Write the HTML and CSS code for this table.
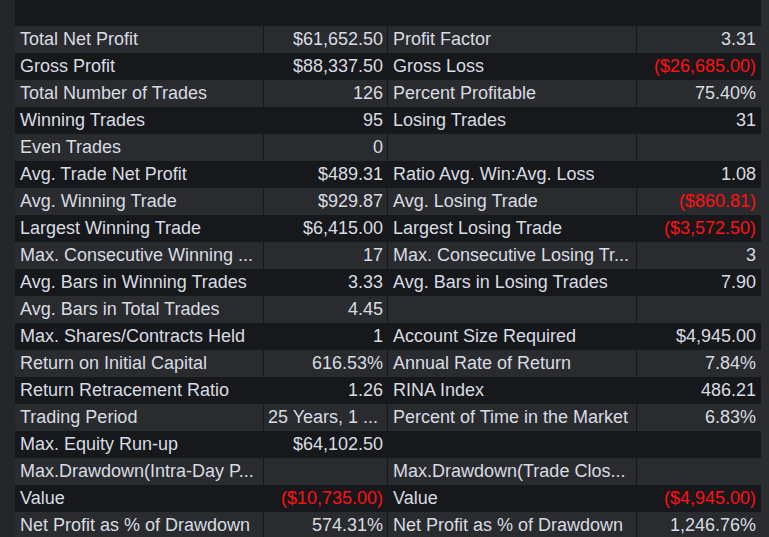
FILE: index.html
```html
<!DOCTYPE html>
<html>
<head>
<meta charset="utf-8">
<link rel="stylesheet" href="styles.css">
</head>
<body>
<div class="frame">
  <div class="side-left"></div>
  <div class="main">
    <div class="header"></div>
    <div class="table">
      <div class="row light"><div class="c lbl">Total Net Profit</div><div class="c val">$61,652.50</div><div class="c lbl">Profit Factor</div><div class="c val">3.31</div></div>
      <div class="row dark"><div class="c lbl">Gross Profit</div><div class="c val">$88,337.50</div><div class="c lbl">Gross Loss</div><div class="c val neg">($26,685.00)</div></div>
      <div class="row light"><div class="c lbl">Total Number of Trades</div><div class="c val">126</div><div class="c lbl">Percent Profitable</div><div class="c val">75.40%</div></div>
      <div class="row dark"><div class="c lbl">Winning Trades</div><div class="c val">95</div><div class="c lbl">Losing Trades</div><div class="c val">31</div></div>
      <div class="row light"><div class="c lbl">Even Trades</div><div class="c val">0</div><div class="c lbl"></div><div class="c val"></div></div>
      <div class="row dark"><div class="c lbl">Avg. Trade Net Profit</div><div class="c val">$489.31</div><div class="c lbl">Ratio Avg. Win:Avg. Loss</div><div class="c val">1.08</div></div>
      <div class="row light"><div class="c lbl">Avg. Winning Trade</div><div class="c val">$929.87</div><div class="c lbl">Avg. Losing Trade</div><div class="c val neg">($860.81)</div></div>
      <div class="row dark"><div class="c lbl">Largest Winning Trade</div><div class="c val">$6,415.00</div><div class="c lbl">Largest Losing Trade</div><div class="c val neg">($3,572.50)</div></div>
      <div class="row light"><div class="c lbl">Max. Consecutive Winning ...</div><div class="c val">17</div><div class="c lbl">Max. Consecutive Losing Tr...</div><div class="c val">3</div></div>
      <div class="row dark"><div class="c lbl">Avg. Bars in Winning Trades</div><div class="c val">3.33</div><div class="c lbl">Avg. Bars in Losing Trades</div><div class="c val">7.90</div></div>
      <div class="row light"><div class="c lbl">Avg. Bars in Total Trades</div><div class="c val">4.45</div><div class="c lbl"></div><div class="c val"></div></div>
      <div class="row dark"><div class="c lbl">Max. Shares/Contracts Held</div><div class="c val">1</div><div class="c lbl">Account Size Required</div><div class="c val">$4,945.00</div></div>
      <div class="row light"><div class="c lbl">Return on Initial Capital</div><div class="c val">616.53%</div><div class="c lbl">Annual Rate of Return</div><div class="c val">7.84%</div></div>
      <div class="row dark"><div class="c lbl">Return Retracement Ratio</div><div class="c val">1.26</div><div class="c lbl">RINA Index</div><div class="c val">486.21</div></div>
      <div class="row light"><div class="c lbl">Trading Period</div><div class="c val left">25 Years, 1 ...</div><div class="c lbl">Percent of Time in the Market</div><div class="c val">6.83%</div></div>
      <div class="row dark"><div class="c lbl">Max. Equity Run-up</div><div class="c val">$64,102.50</div><div class="c lbl"></div><div class="c val"></div></div>
      <div class="row light"><div class="c lbl">Max.Drawdown(Intra-Day P...</div><div class="c val"></div><div class="c lbl">Max.Drawdown(Trade Clos...</div><div class="c val"></div></div>
      <div class="row dark"><div class="c lbl">Value</div><div class="c val neg">($10,735.00)</div><div class="c lbl">Value</div><div class="c val neg">($4,945.00)</div></div>
      <div class="row light"><div class="c lbl">Net Profit as % of Drawdown</div><div class="c val">574.31%</div><div class="c lbl">Net Profit as % of Drawdown</div><div class="c val">1,246.76%</div></div>
    </div>
  </div>
  <div class="side-right"></div>
</div>
</body>
</html>
```
FILE: styles.css
```css
html, body {
  margin: 0;
  padding: 0;
  height: 100%;
  overflow: hidden;
  background: #17181c;
}
.frame {
  display: flex;
  height: 537px;
  font-family: "Liberation Sans", Arial, sans-serif;
  font-size: 18px;
  color: #d8dce2;
}
.side-left {
  width: 15px;
  flex: none;
  background: #252629;
}
.side-right {
  width: 8px;
  flex: none;
  background: #2b2c30;
}
.main {
  width: 746px;
  flex: none;
  display: flex;
  flex-direction: column;
  background: #17181c;
}
.header {
  height: 26px;
  flex: none;
  background: #17181c;
}
.table {
  display: flex;
  flex-direction: column;
}
.row {
  display: grid;
  grid-template-columns: 249px 124px 249px 124px;
  height: 27px;
  line-height: 27px;
}
.row.light { background: #2a2b2f; }
.row.dark { background: #17181c; }
.c {
  border-right: 1px solid #17181c;
  white-space: nowrap;
  overflow: hidden;
}
.c:last-child { border-right: none; }
.lbl {
  padding-left: 5px;
}
.val {
  text-align: right;
  padding-right: 4px;
}
.row .c:last-child.val {
  padding-right: 5px;
}
.val.left {
  text-align: left;
  padding-left: 4px;
  padding-right: 0;
}
.neg {
  color: #ff1010;
}
```
